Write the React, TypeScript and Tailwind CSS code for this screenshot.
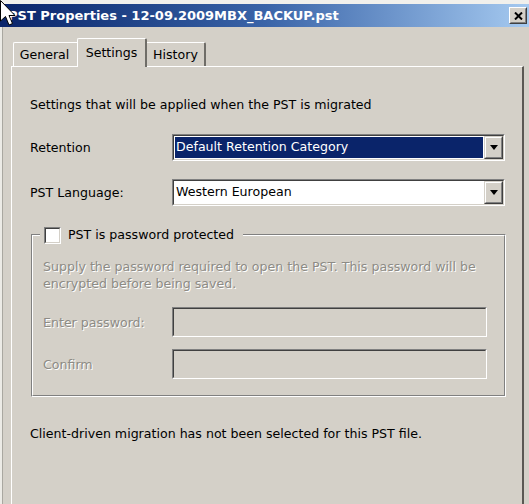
import React from "react";

function Sunken({ className = "", inner = "", children }: { className?: string; inner?: string; children?: React.ReactNode }) {
  return (
    <div className={`border border-t-[#808080] border-l-[#808080] border-b-white border-r-white ${className}`}>
      <div className={`h-full border border-t-[#404040] border-l-[#404040] border-b-[#d4d0c8] border-r-[#d4d0c8] ${inner}`}>
        {children}
      </div>
    </div>
  );
}

function DropButton() {
  return (
    <div className="w-[19px] h-full border border-t-[#d4d0c8] border-l-[#d4d0c8] border-b-[#404040] border-r-[#404040] bg-[#d4d0c8]">
      <div className="h-full flex items-center justify-center border border-t-white border-l-white border-b-[#808080] border-r-[#808080]">
        <svg width="8" height="5" viewBox="0 0 8 5">
          <path d="M0 0h8L4 5z" fill="#000" />
        </svg>
      </div>
    </div>
  );
}

function Select({ value, selected }: { value: string; selected?: boolean }) {
  return (
    <Sunken className="w-[333px] h-[27px]" inner="flex bg-white">
      <div className="flex-1 p-[1px]">
        <div
          className={`h-full flex items-center pl-[1px] ${
            selected ? "bg-[#0a246a] text-white" : "text-black"
          }`}
        >
          {value}
        </div>
      </div>
      <DropButton />
    </Sunken>
  );
}

export default function App() {
  return (
    <div className="relative w-[529px] h-[504px] overflow-hidden bg-[#d4d0c8] font-['DejaVu_Sans',sans-serif] text-[12.6px] text-black">
      {/* window top edge */}
      <div className="h-[4px] bg-[#f1f0ec]" />

      {/* Title bar */}
      <div className="h-[23px] flex items-center bg-linear-to-r from-[#0a246a] via-[#3a64a8] to-[#a6caf0] pl-[8px] pr-[2px]">
        <span className="text-white font-bold text-[13px]">PST Properties - 12-09.2009MBX_BACKUP.pst</span>
        <div className="ml-auto w-[18px] h-[17px] border border-t-white border-l-white border-b-[#404040] border-r-[#404040] bg-[#d4d0c8]">
          <div className="h-full flex items-center justify-center border border-t-[#d4d0c8] border-l-[#d4d0c8] border-b-[#808080] border-r-[#808080]">
            <svg width="9" height="8" viewBox="0 0 9 8">
              <path d="M1 0.5L8 7.5M8 0.5L1 7.5" stroke="#000" strokeWidth="2" />
            </svg>
          </div>
        </div>
      </div>

      {/* Body */}
      <div className="flex h-full">
        <div className="w-[3px] h-full bg-[#ecebe6] border-r border-[#a9a7a0]" />
        <div className="flex-1 pl-[8px] pt-[11px]">
          {/* Tabs */}
          <div className="flex items-end h-[28px] pl-[2px]">
            <div className="w-[64px] h-[24px] border-t border-l border-white rounded-tl-[2px] flex items-center justify-center pr-[2px] pt-[1px]">
              General
            </div>
            <div className="relative z-10 -mb-[1px] w-[70px] h-[29px] bg-[#d4d0c8] border-t border-l border-white border-r-2 border-r-[#6f6d68] rounded-tl-[2px] rounded-tr-[2px] flex items-start justify-center pt-[5px]">
              Settings
            </div>
            <div className="w-[59px] h-[24px] border-t border-white border-r-2 border-r-[#6f6d68] rounded-tr-[2px] flex items-center justify-center pt-[1px]">
              History
            </div>
          </div>

          {/* Tab panel */}
          <div className="w-[513px] h-[460px] border-t border-l border-white border-r-2 border-r-[#5a5853] pl-[18px] pt-[28px]">
            <div className="h-[20px] leading-[20px]">Settings that will be applied when the PST is migrated</div>

            <div className="flex items-center mt-[19px]">
              <div className="w-[142px] pt-[2px]">Retention</div>
              <Select value="Default Retention Category" selected />
            </div>

            <div className="flex items-center mt-[18px]">
              <div className="w-[142px] pt-[2px]">PST Language:</div>
              <Select value="Western European" />
            </div>

            {/* Group box */}
            <div className="relative ml-[1px] mt-[28px] w-[475px] border border-t-[#808080] border-l-[#808080] border-b-white border-r-white">
              <div className="border border-t-white border-l-white border-b-[#808080] border-r-[#808080] pl-[10px] pt-[22px] pb-[16px]">
                <div className="leading-[17px] text-[#8d8b85] [text-shadow:1px_1px_0_#fff]">
                  Supply the password required to open the PST. This password will be
                  <br />
                  encrypted before being saved.
                </div>

                <div className="flex items-center mt-[15px]">
                  <div className="w-[129px] pt-[2px] text-[#8d8b85] [text-shadow:1px_1px_0_#fff]">Enter password:</div>
                  <Sunken className="w-[315px] h-[30px]" />
                </div>

                <div className="flex items-center mt-[12px]">
                  <div className="w-[129px] pt-[2px] text-[#8d8b85] [text-shadow:1px_1px_0_#fff]">Confirm</div>
                  <Sunken className="w-[315px] h-[30px]" />
                </div>
              </div>

              {/* legend with checkbox */}
              <div className="absolute left-[8px] -top-[9px] flex items-center gap-[7px] bg-[#d4d0c8] pl-[4px] pr-[9px]">
                <Sunken className="w-[17px] h-[17px]" inner="bg-white" />
                <span>PST is password protected</span>
              </div>
            </div>

            <div className="mt-[27px] h-[20px] leading-[20px]">
              Client-driven migration has not been selected for this PST file.
            </div>
          </div>
        </div>
      </div>

      {/* Mouse cursor */}
      <svg className="absolute left-0 top-0" width="16" height="27" viewBox="0 0 16 27">
        <path
          d="M0.5 0.5 L0.5 21 L5.5 16.5 L9 25 L12.5 23.5 L9 15.5 L15 15.5 Z"
          fill="#fff"
          stroke="#000"
          strokeWidth="1"
          strokeLinejoin="miter"
        />
      </svg>
    </div>
  );
}
